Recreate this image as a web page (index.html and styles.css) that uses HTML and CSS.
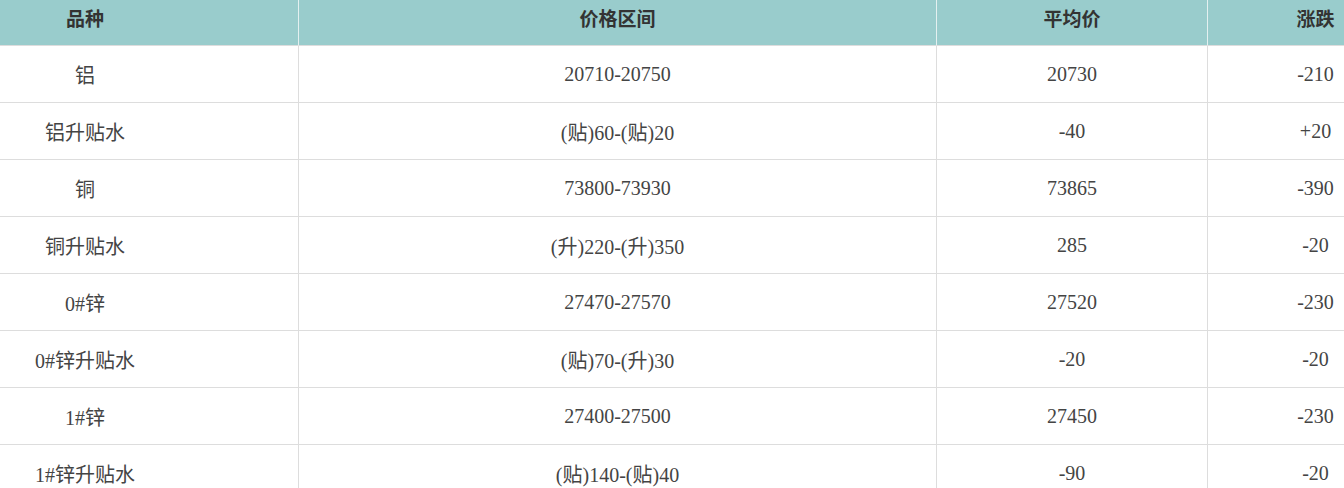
FILE: index.html
```html
<!DOCTYPE html>
<html lang="zh">
<head>
<meta charset="utf-8">
<link rel="stylesheet" href="styles.css">
</head>
<body>
<div class="viewport">
  <div class="grid">
    <div class="th">品种</div><div class="th">价格区间</div><div class="th">平均价</div><div class="th">涨跌</div>
    <div class="td">铝</div><div class="td">20710-20750</div><div class="td">20730</div><div class="td">-210</div>
    <div class="td">铝升贴水</div><div class="td">(贴)60-(贴)20</div><div class="td">-40</div><div class="td">+20</div>
    <div class="td">铜</div><div class="td">73800-73930</div><div class="td">73865</div><div class="td">-390</div>
    <div class="td">铜升贴水</div><div class="td">(升)220-(升)350</div><div class="td">285</div><div class="td">-20</div>
    <div class="td">0#锌</div><div class="td">27470-27570</div><div class="td">27520</div><div class="td">-230</div>
    <div class="td">0#锌升贴水</div><div class="td">(贴)70-(升)30</div><div class="td">-20</div><div class="td">-20</div>
    <div class="td">1#锌</div><div class="td">27400-27500</div><div class="td">27450</div><div class="td">-230</div>
    <div class="td">1#锌升贴水</div><div class="td">(贴)140-(贴)40</div><div class="td">-90</div><div class="td">-20</div>
  </div>
</div>
</body>
</html>
```
FILE: styles.css
```css
html, body {
  margin: 0;
  padding: 0;
  overflow: hidden;
  background: #fff;
}
.viewport {
  width: 1344px;
  overflow: hidden;
}
.grid {
  display: grid;
  grid-template-columns: 426px 638px 271px 216px;
  width: 1551px;
  margin-left: -128px;
  font-family: "Liberation Serif", "Noto Sans CJK SC", serif;
  font-size: 20px;
}
.th, .td {
  box-sizing: border-box;
  display: flex;
  justify-content: center;
  border-bottom: 1px solid #ddd;
}
.th + .th, .td:not(:nth-child(4n+1)) {
  border-left: 1px solid #ddd;
}
.th {
  height: 46px;
  background: #99cccc;
  color: #333;
  font-weight: bold;
  align-items: flex-start;
  padding-top: 4px;
  font-family: "Noto Sans CJK SC", sans-serif;
  font-size: 19px;
}
.th + .th {
  border-left-color: #e4f0f0;
}
.td {
  height: 57px;
  align-items: center;
  color: #444;
}
```
